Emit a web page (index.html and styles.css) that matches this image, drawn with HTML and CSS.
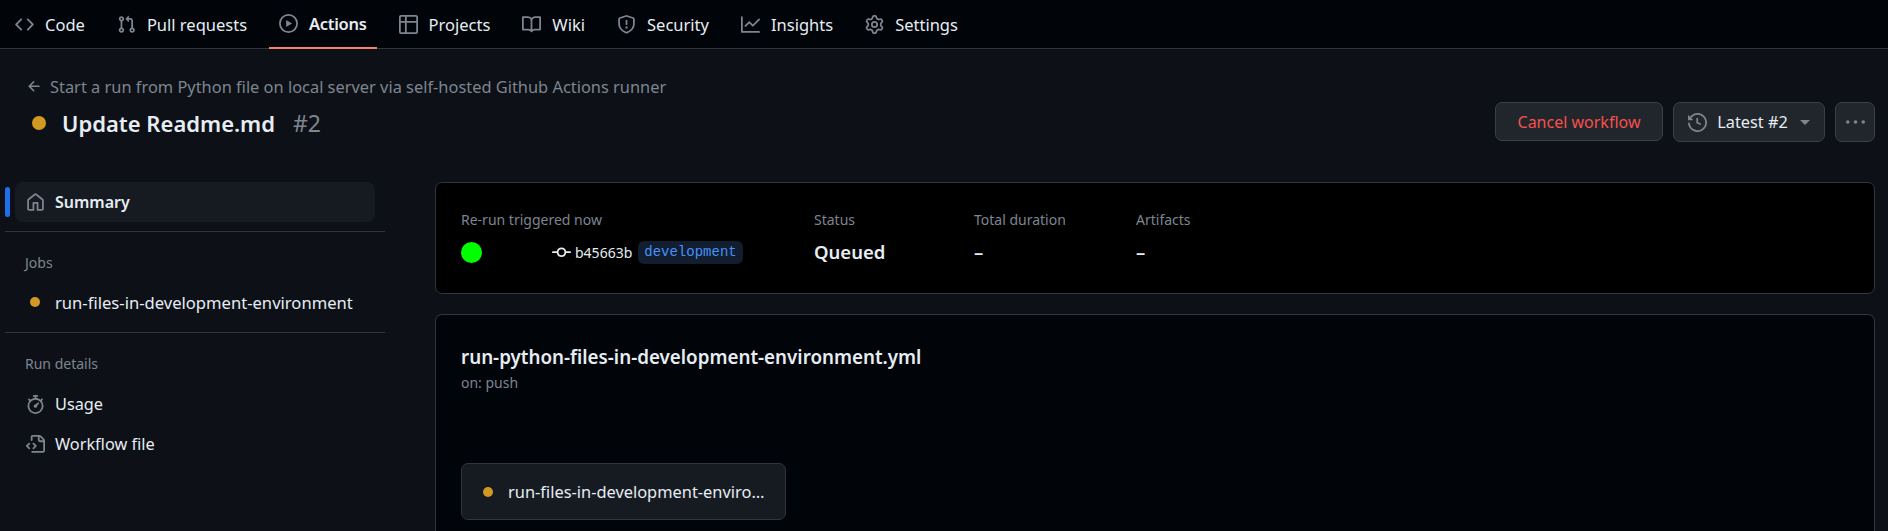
FILE: index.html
```html
<!DOCTYPE html>
<html lang="en">
<head>
  <meta charset="UTF-8">
  <title>Update Readme.md #2</title>
  <link rel="stylesheet" href="styles.css">
</head>
<body>

  <nav class="tabs">
    <a class="tab"><svg class="icon" viewBox="0 0 16 16"><path d="m11.28 3.22 4.25 4.25a.75.75 0 0 1 0 1.06l-4.25 4.25a.749.749 0 0 1-1.275-.326.749.749 0 0 1 .215-.734L13.94 8l-3.72-3.72a.749.749 0 0 1 .326-1.275.749.749 0 0 1 .734.215Zm-6.56 0a.751.751 0 0 1 1.042.018.751.751 0 0 1 .018 1.042L2.06 8l3.72 3.72a.749.749 0 0 1-.326 1.275.749.749 0 0 1-.734-.215L.47 8.53a.75.75 0 0 1 0-1.06Z"/></svg>Code</a>
    <a class="tab"><svg class="icon" viewBox="0 0 16 16"><path d="M1.5 3.25a2.25 2.25 0 1 1 3 2.122v5.256a2.251 2.251 0 1 1-1.5 0V5.372A2.25 2.25 0 0 1 1.5 3.25Zm5.677-.177L9.573.677A.25.25 0 0 1 10 .854V2.5h1A2.5 2.5 0 0 1 13.5 5v5.628a2.251 2.251 0 1 1-1.5 0V5a1 1 0 0 0-1-1h-1v1.646a.25.25 0 0 1-.427.177L7.177 3.427a.25.25 0 0 1 0-.354ZM3.75 2.5a.75.75 0 1 0 0 1.5.75.75 0 0 0 0-1.5Zm0 9.5a.75.75 0 1 0 0 1.5.75.75 0 0 0 0-1.5Zm8.25.75a.75.75 0 1 0 1.5 0 .75.75 0 0 0-1.5 0Z"/></svg>Pull requests</a>
    <a class="tab active"><svg class="icon" viewBox="0 0 16 16"><path d="M8 0a8 8 0 1 1 0 16A8 8 0 0 1 8 0ZM1.5 8a6.5 6.5 0 1 0 13 0 6.5 6.5 0 0 0-13 0Zm4.879-2.773 4.264 2.559a.25.25 0 0 1 0 .428l-4.264 2.559A.25.25 0 0 1 6 10.559V5.442a.25.25 0 0 1 .379-.215Z"/></svg>Actions</a>
    <a class="tab"><svg class="icon" viewBox="0 0 16 16"><path d="M0 1.75C0 .784.784 0 1.75 0h12.5C15.216 0 16 .784 16 1.75v12.5A1.75 1.75 0 0 1 14.25 16H1.75A1.75 1.75 0 0 1 0 14.25ZM6.5 6.5v8h7.75a.25.25 0 0 0 .25-.25V6.5Zm8-1.5V1.75a.25.25 0 0 0-.25-.25H6.5V5Zm-13 1.5v7.75c0 .138.112.25.25.25H5v-8ZM5 5V1.5H1.75a.25.25 0 0 0-.25.25V5Z"/></svg>Projects</a>
    <a class="tab"><svg class="icon" viewBox="0 0 16 16"><path d="M0 1.75A.75.75 0 0 1 .75 1h4.253c1.227 0 2.317.59 3 1.501A3.743 3.743 0 0 1 11.006 1h4.245a.75.75 0 0 1 .75.75v10.5a.75.75 0 0 1-.75.75h-4.507a2.25 2.25 0 0 0-1.591.659l-.622.621a.75.75 0 0 1-1.06 0l-.622-.621A2.25 2.25 0 0 0 5.258 13H.75a.75.75 0 0 1-.75-.75Zm7.251 10.324.004-5.073-.002-2.253A2.25 2.25 0 0 0 5.003 2.5H1.5v9h3.757a3.75 3.75 0 0 1 1.994.574ZM8.755 4.75l-.004 7.322a3.752 3.752 0 0 1 1.992-.572H14.5v-9h-3.495a2.25 2.25 0 0 0-2.25 2.25Z"/></svg>Wiki</a>
    <a class="tab"><svg class="icon" viewBox="0 0 16 16"><path d="M7.467.133a1.748 1.748 0 0 1 1.066 0l5.25 1.68A1.75 1.75 0 0 1 15 3.48V7c0 1.566-.32 3.182-1.303 4.682-.983 1.498-2.585 2.813-5.032 3.855a1.697 1.697 0 0 1-1.33 0c-2.447-1.042-4.049-2.357-5.032-3.855C1.32 10.182 1 8.566 1 7V3.48a1.75 1.75 0 0 1 1.217-1.667Zm.61 1.429a.25.25 0 0 0-.153 0l-5.25 1.68a.25.25 0 0 0-.174.238V7c0 1.358.275 2.666 1.057 3.86.784 1.194 2.121 2.34 4.366 3.297a.196.196 0 0 0 .154 0c2.245-.956 3.582-2.104 4.366-3.298C13.225 9.666 13.5 8.36 13.5 7V3.48a.251.251 0 0 0-.174-.237l-5.25-1.68ZM8.75 4.75v3a.75.75 0 0 1-1.5 0v-3a.75.75 0 0 1 1.5 0ZM9 10.5a1 1 0 1 1-2 0 1 1 0 0 1 2 0Z"/></svg>Security</a>
    <a class="tab"><svg class="icon" viewBox="0 0 16 16"><path d="M1.5 1.75V13.5h13.75a.75.75 0 0 1 0 1.5H.75a.75.75 0 0 1-.75-.75V1.75a.75.75 0 0 1 1.5 0Zm14.28 2.53-5.25 5.25a.75.75 0 0 1-1.06 0L7 7.06 4.28 9.78a.751.751 0 0 1-1.042-.018.751.751 0 0 1-.018-1.042l3.25-3.25a.75.75 0 0 1 1.06 0L10 7.94l4.72-4.72a.751.751 0 0 1 1.042.018.751.751 0 0 1 .018 1.042Z"/></svg>Insights</a>
    <a class="tab"><svg class="icon" viewBox="0 0 16 16"><path d="M8 0a8.2 8.2 0 0 1 .701.031C9.444.095 9.99.645 10.16 1.29l.288 1.107c.018.066.079.158.212.224.231.114.454.243.668.386.123.082.233.09.299.071l1.103-.303c.644-.176 1.392.021 1.82.63.27.385.506.792.704 1.218.315.675.111 1.422-.364 1.891l-.814.806c-.049.048-.098.147-.088.294.016.257.016.515 0 .772-.01.147.038.246.088.294l.814.806c.475.469.679 1.216.364 1.891a7.977 7.977 0 0 1-.704 1.217c-.428.61-1.176.807-1.82.63l-1.102-.302c-.067-.019-.177-.011-.3.071a5.909 5.909 0 0 1-.668.386c-.133.066-.194.158-.211.224l-.29 1.106c-.168.646-.715 1.196-1.458 1.26a8.006 8.006 0 0 1-1.402 0c-.743-.064-1.289-.614-1.458-1.26l-.289-1.106c-.018-.066-.079-.158-.212-.224a5.738 5.738 0 0 1-.668-.386c-.123-.082-.233-.09-.299-.071l-1.103.303c-.644.176-1.392-.021-1.82-.63a8.12 8.12 0 0 1-.704-1.218c-.315-.675-.111-1.422.363-1.891l.815-.806c.05-.048.098-.147.088-.294a6.214 6.214 0 0 1 0-.772c.01-.147-.038-.246-.088-.294l-.815-.806C.635 6.045.431 5.298.746 4.623a7.92 7.92 0 0 1 .704-1.217c.428-.61 1.176-.807 1.82-.63l1.102.302c.067.019.177.011.3-.071.214-.143.437-.272.668-.386.133-.066.194-.158.211-.224l.29-1.106C6.009.645 6.556.095 7.299.03 7.53.01 7.764 0 8 0Zm-.571 1.525c-.036.003-.108.036-.137.146l-.289 1.105c-.147.561-.549.967-.998 1.189-.173.086-.34.183-.5.29-.417.278-.97.423-1.529.27l-1.103-.303c-.109-.03-.175.016-.195.045-.22.312-.412.644-.573.99-.014.031-.021.11.059.19l.815.806c.411.406.562.957.53 1.456a4.709 4.709 0 0 0 0 .582c.032.499-.119 1.05-.53 1.456l-.815.806c-.081.08-.073.159-.059.19.162.346.353.677.573.989.02.03.085.076.195.046l1.102-.303c.56-.153 1.113-.008 1.53.27.161.107.328.204.501.29.447.222.85.629.997 1.189l.289 1.105c.029.109.101.143.137.146a6.6 6.6 0 0 0 1.142 0c.036-.003.108-.036.137-.146l.289-1.105c.147-.561.549-.967.998-1.189.173-.086.34-.183.5-.29.417-.278.97-.423 1.529-.27l1.103.303c.109.029.175-.016.195-.045.22-.313.411-.644.573-.99.014-.031.021-.11-.059-.19l-.815-.806c-.411-.406-.562-.957-.53-1.456a4.709 4.709 0 0 0 0-.582c-.032-.499.119-1.05.53-1.456l.815-.806c.081-.08.073-.159.059-.19a6.464 6.464 0 0 0-.573-.989c-.02-.03-.085-.076-.195-.046l-1.102.303c-.56.153-1.113.008-1.53-.27a4.44 4.44 0 0 0-.501-.29c-.447-.222-.85-.629-.997-1.189l-.289-1.105c-.029-.11-.101-.143-.137-.146a6.6 6.6 0 0 0-1.142 0ZM11 8a3 3 0 1 1-6 0 3 3 0 0 1 6 0ZM9.5 8a1.5 1.5 0 1 0-3.001.001A1.5 1.5 0 0 0 9.5 8Z"/></svg>Settings</a>
  </nav>

  <header class="run-header">
    <div class="run-heading">
      <a class="back-link"><svg class="icon back-icon" viewBox="0 0 16 16"><path d="M7.78 12.53a.75.75 0 0 1-1.06 0L2.47 8.28a.75.75 0 0 1 0-1.06l4.25-4.25a.751.751 0 0 1 1.042.018.751.751 0 0 1 .018 1.042L4.81 7h7.44a.75.75 0 0 1 0 1.5H4.81l2.97 2.97a.75.75 0 0 1 0 1.06Z"/></svg>Start a run from Python file on local server via self-hosted Github Actions runner</a>
      <h1 class="run-title"><span class="dot dot-title"></span>Update Readme.md<span class="run-number">#2</span></h1>
    </div>
    <div class="run-actions">
      <button class="btn btn-danger">Cancel workflow</button>
      <button class="btn btn-latest"><svg class="icon" viewBox="0 0 16 16"><path d="m.427 1.927 1.215 1.215a8.002 8.002 0 1 1-1.6 5.685.75.75 0 1 1 1.493-.154 6.5 6.5 0 1 0 1.18-4.458l1.358 1.358A.25.25 0 0 1 3.896 6H.25A.25.25 0 0 1 0 5.75V2.104a.25.25 0 0 1 .427-.177ZM7.75 4a.75.75 0 0 1 .75.75v2.992l2.028.812a.75.75 0 0 1-.557 1.392l-2.5-1A.751.751 0 0 1 7 8.25v-3.5A.75.75 0 0 1 7.75 4Z"/></svg>Latest #2<span class="caret"></span></button>
      <button class="btn btn-more"><svg class="icon" viewBox="0 0 16 16"><path d="M8 9a1.5 1.5 0 1 0 0-3 1.5 1.5 0 0 0 0 3ZM1.5 9a1.5 1.5 0 1 0 0-3 1.5 1.5 0 0 0 0 3Zm13 0a1.5 1.5 0 1 0 0-3 1.5 1.5 0 0 0 0 3Z"/></svg></button>
    </div>
  </header>

  <div class="layout">
    <aside class="sidebar">
      <div class="side-current">
        <a class="side-item selected"><span class="side-slot"><svg class="icon" viewBox="0 0 16 16"><path d="M6.906.664a1.749 1.749 0 0 1 2.187 0l5.25 4.2c.415.332.657.835.657 1.367v7.019A1.75 1.75 0 0 1 13.25 15h-3.5a.75.75 0 0 1-.75-.75V9H7v5.25a.75.75 0 0 1-.75.75h-3.5A1.75 1.75 0 0 1 1 13.25V6.23c0-.531.242-1.034.657-1.366l5.25-4.2Zm1.25 1.171a.25.25 0 0 0-.312 0l-5.25 4.2a.25.25 0 0 0-.094.196v7.019c0 .138.112.25.25.25H5.5V8.25a.75.75 0 0 1 .75-.75h3.5a.75.75 0 0 1 .75.75v5.25h2.75a.25.25 0 0 0 .25-.25V6.23a.25.25 0 0 0-.094-.195Z"/></svg></span>Summary</a>
      </div>
      <div class="side-group side-jobs">
        <div class="side-label">Jobs</div>
        <a class="side-item job-link"><span class="side-slot"><span class="dot"></span></span>run-files-in-development-environment</a>
      </div>
      <div class="side-group side-details">
        <div class="side-label">Run details</div>
        <a class="side-item"><span class="side-slot"><svg class="icon" viewBox="0 0 16 16"><path d="M5.75.75A.75.75 0 0 1 6.5 0h3a.75.75 0 0 1 0 1.5h-.75v1l-.001.041a6.724 6.724 0 0 1 3.464 1.435l.007-.006.75-.75a.749.749 0 0 1 1.275.326.749.749 0 0 1-.215.734l-.75.75-.006.007a6.75 6.75 0 1 1-10.548 0L2.72 5.03l-.75-.75a.751.751 0 0 1 .018-1.042.751.751 0 0 1 1.042-.018l.75.75.007.006A6.72 6.72 0 0 1 7.25 2.541V1.5H6.5a.75.75 0 0 1-.75-.75ZM8 14.5a5.25 5.25 0 1 0-.001-10.501A5.25 5.25 0 0 0 8 14.5Zm.389-6.7 1.33-1.33a.75.75 0 1 1 1.061 1.06L9.45 8.861A1.503 1.503 0 0 1 8 10.75a1.499 1.499 0 1 1 .389-2.95Z"/></svg></span>Usage</a>
        <a class="side-item"><span class="side-slot"><svg class="icon" viewBox="0 0 16 16"><path d="M4 1.75C4 .784 4.784 0 5.75 0h5.586c.464 0 .909.184 1.237.513l2.914 2.914c.329.328.513.773.513 1.237v8.586A1.75 1.75 0 0 1 14.25 15h-9a.75.75 0 0 1 0-1.5h9a.25.25 0 0 0 .25-.25V6h-2.75A1.75 1.75 0 0 1 10 4.25V1.5H5.75a.25.25 0 0 0-.25.25v2.5a.75.75 0 0 1-1.5 0Zm1.72 4.97a.75.75 0 0 1 1.06 0l2 2a.75.75 0 0 1 0 1.06l-2 2a.749.749 0 0 1-1.275-.326.749.749 0 0 1 .215-.734l1.47-1.47-1.47-1.47a.75.75 0 0 1 0-1.06ZM3.28 7.78 1.81 9.25l1.47 1.47a.751.751 0 0 1-.018 1.042.751.751 0 0 1-1.042.018l-2-2a.75.75 0 0 1 0-1.06l2-2a.751.751 0 0 1 1.042.018.751.751 0 0 1 .018 1.042Zm8.22-6.218V4.25c0 .138.112.25.25.25h2.688l-.011-.013-2.914-2.914-.013-.011Z"/></svg></span>Workflow file</a>
      </div>
    </aside>

    <main class="content">
      <section class="card summary-card">
        <div class="stat stat-trigger">
          <div class="stat-label">Re-run triggered now</div>
          <div class="trigger-row">
            <span class="avatar"></span>
            <svg class="icon commit-icon" viewBox="0 0 16 16"><path d="M11.93 8.5a4.002 4.002 0 0 1-7.86 0H.75a.75.75 0 0 1 0-1.5h3.32a4.002 4.002 0 0 1 7.86 0h3.32a.75.75 0 0 1 0 1.5Zm-1.43-.75a2.5 2.5 0 1 0-5 0 2.5 2.5 0 0 0 5 0Z"/></svg>
            <span class="sha">b45663b</span>
            <span class="branch">development</span>
          </div>
        </div>
        <div class="stat stat-status">
          <div class="stat-label">Status</div>
          <div class="stat-value">Queued</div>
        </div>
        <div class="stat stat-duration">
          <div class="stat-label">Total duration</div>
          <div class="stat-value">–</div>
        </div>
        <div class="stat">
          <div class="stat-label">Artifacts</div>
          <div class="stat-value">–</div>
        </div>
      </section>

      <section class="card graph-card">
        <h2 class="workflow-name">run-python-files-in-development-environment.yml</h2>
        <div class="workflow-event">on: push</div>
        <div class="job-box"><span class="dot"></span><span class="job-name">run-files-in-development-environment</span></div>
      </section>
    </main>
  </div>

</body>
</html>
```

FILE: styles.css
```css
* {
  box-sizing: border-box;
}

html, body {
  height: 531px;
  overflow: hidden;
}

body {
  margin: 0;
  background-color: #0d1117;
  color: #e6edf3;
  font-family: "Noto Sans", Arial, sans-serif;
  font-size: 16.3px;
}

.icon {
  display: block;
  flex: none;
  width: 19px;
  height: 19px;
  fill: #7d8590;
}

.dot {
  display: block;
  width: 10px;
  height: 10px;
  border-radius: 50%;
  background-color: #d29922;
}

/* top tabs */
.tabs {
  display: flex;
  gap: 12px;
  height: 49px;
  padding-left: 5px;
  background-color: #010409;
  border-bottom: 1px solid #30363d;
  font-size: 16.5px;
}

.tab {
  display: flex;
  align-items: center;
  gap: 11px;
  height: 49px;
  padding: 0 10px;
  color: #e6edf3;
}

.tab.active {
  font-weight: 600;
  letter-spacing: -0.3px;
  border-bottom: 2px solid #f78166;
}

/* run title */
.run-header {
  display: flex;
  justify-content: space-between;
  height: 133px;
  padding: 26px 13px 0 26px;
}

.back-link {
  display: flex;
  align-items: center;
  gap: 7px;
  height: 22px;
  color: #7d8590;
  font-size: 16.4px;
}

.back-icon {
  width: 17px;
  height: 17px;
}

.run-title {
  display: flex;
  align-items: center;
  margin: 10px 0 0 6px;
  height: 32px;
  font-size: 22px;
  font-weight: 600;
}

.dot-title {
  width: 14px;
  height: 14px;
  margin-right: 16px;
}

.run-number {
  margin-left: 18px;
  color: #7d8590;
  font-size: 23px;
  font-weight: 400;
}

.run-actions {
  display: flex;
  align-items: flex-start;
  gap: 10px;
  padding-top: 27px;
}

.btn {
  display: flex;
  align-items: center;
  justify-content: center;
  height: 40px;
  border: 1px solid #3a4048;
  border-radius: 7px;
  background-color: #21262d;
  color: #e6edf3;
  font: inherit;
}

.btn-danger {
  width: 168px;
  height: 39px;
  color: #f85149;
  font-size: 16px;
}

.btn-latest {
  width: 152px;
  gap: 10px;
}

.btn-more {
  width: 40px;
}

.caret {
  width: 0;
  height: 0;
  margin-left: 2px;
  border-style: solid;
  border-width: 5px 5px 0;
  border-color: #7d8590 transparent transparent;
}

/* main layout */
.layout {
  display: flex;
  padding-right: 13px;
}

.sidebar {
  flex: none;
  width: 385px;
  padding-left: 5px;
}

.side-current {
  height: 50px;
  padding-left: 10px;
  border-bottom: 1px solid #30363d;
}

.side-item {
  display: flex;
  align-items: center;
  height: 40px;
  color: #e6edf3;
}

.side-item.selected {
  position: relative;
  width: 360px;
  border-radius: 8px;
  background-color: #161b22;
  font-size: 16px;
  font-weight: 600;
}

.side-item.selected::before {
  content: "";
  position: absolute;
  left: -10px;
  top: 5px;
  width: 5px;
  height: 30px;
  border-radius: 3px;
  background-color: #1f6feb;
}

.side-slot {
  display: flex;
  flex: none;
  justify-content: center;
  width: 40px;
}

.side-group {
  padding-left: 20px;
}

.side-group .side-slot {
  justify-content: flex-start;
  width: 30px;
  padding-left: 1px;
}

.side-group .side-slot .dot {
  margin-left: 4px;
}

.side-jobs {
  height: 101px;
  padding-top: 20px;
  border-bottom: 1px solid #30363d;
}

.side-jobs .side-item {
  margin-top: 8px;
}

.job-link {
  font-size: 16.6px;
  white-space: nowrap;
}

.side-details {
  padding-top: 20px;
}

.side-label {
  height: 22px;
  color: #7d8590;
  font-size: 14px;
  line-height: 22px;
}

.side-details .side-label {
  margin-bottom: 9px;
}

.content {
  flex: 1;
  margin-left: 50px;
}

.card {
  border: 1px solid #30363d;
  border-radius: 7px;
  background-color: #010409;
}

.summary-card {
  display: flex;
  height: 112px;
  padding: 25px 25px 0;
  background-color: #000;
}

.stat-trigger {
  width: 353px;
}

.stat-status {
  width: 160px;
}

.stat-duration {
  width: 162px;
}

.stat-label {
  height: 24px;
  color: #7d8590;
  font-size: 14px;
  line-height: 24px;
}

.stat-value {
  margin-top: 5px;
  font-size: 18.5px;
  font-weight: 600;
  line-height: 30px;
}

.trigger-row {
  display: flex;
  align-items: center;
  height: 30px;
  margin-top: 5px;
}

.avatar {
  flex: none;
  width: 21px;
  height: 21px;
  margin-right: 70px;
  border-radius: 50%;
  background-color: #0f0;
}

.commit-icon {
  width: 19px;
  height: 19px;
  fill: #e6edf3;
}

.sha {
  margin: 0 6px 0 4px;
  font-size: 14px;
}

.branch {
  padding: 0 6px;
  height: 23px;
  border-radius: 6px;
  background-color: #121d2f;
  color: #4493f8;
  font-family: "Liberation Mono", monospace;
  font-size: 14px;
  line-height: 23px;
}

.graph-card {
  height: 217px;
  margin-top: 20px;
  padding: 28px 25px 0;
  border-bottom: 0;
  border-radius: 7px 7px 0 0;
}

.workflow-name {
  margin: 0;
  font-size: 18.8px;
  font-weight: 600;
  line-height: 28px;
}

.workflow-event {
  color: #7d8590;
  font-size: 14px;
  line-height: 24px;
}

.job-box {
  display: flex;
  align-items: center;
  gap: 15px;
  width: 325px;
  height: 57px;
  margin-top: 68px;
  padding: 0 15px 0 21px;
  border: 1px solid #30363d;
  border-radius: 7px;
  background-color: #161b22;
  font-size: 16.4px;
}

.job-box .dot {
  flex: none;
}

.job-name {
  overflow: hidden;
  white-space: nowrap;
  text-overflow: ellipsis;
}
```
